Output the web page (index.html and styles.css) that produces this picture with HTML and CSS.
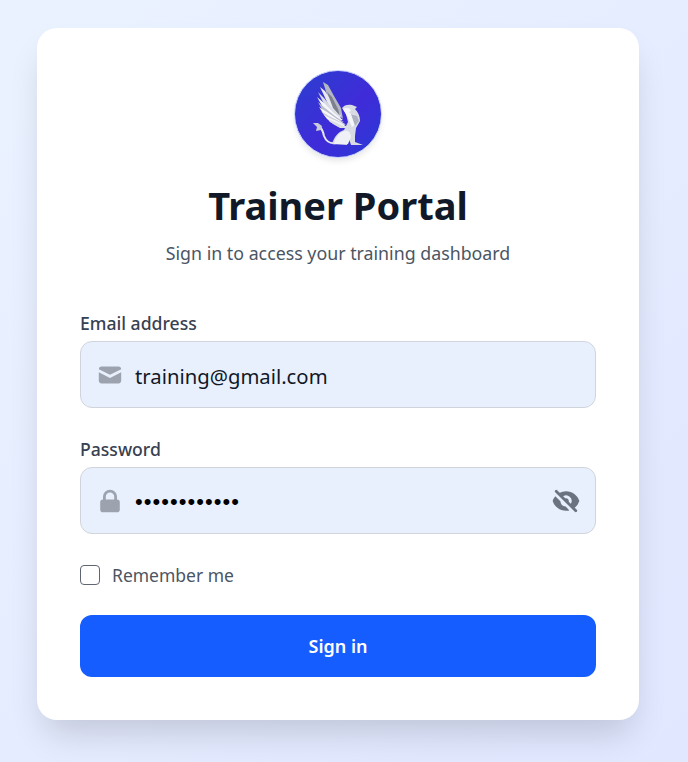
FILE: index.html
```html
<!DOCTYPE html>
<html lang="en">
<head>
    <meta charset="UTF-8">
    <meta name="viewport" content="width=device-width, initial-scale=1.0">
    <title>Trainer Portal</title>
    <link rel="stylesheet" href="styles.css">
</head>
<body>
    <div class="card">
        <div class="logo">
            <svg viewBox="0 0 88 88" width="88" height="88">
                <!-- griffin: wing feathers back to front, then body -->
                <g class="griffin">
                    <path fill="#b4b7c3" d="M29 12 L34 15 L40 26 L47 38 L49 49 L43 44 L34 28 Z"/>
                    <path fill="#e9eaf0" d="M26 17 L31 21 L38 32 L47 46 L45 48 L34 34 Z"/>
                    <path fill="#7d818e" d="M33 22 L38 27 L44 39 L46 46 L39 38 Z"/>
                    <path fill="#d8dae3" d="M24 22 L30 28 L38 38 L47 48 L44 49 L32 38 Z"/>
                    <path fill="#f6f7fa" d="M23 27 L30 33 L40 43 L49 50 L45 50 L31 41 Z"/>
                    <path fill="#bcbfcb" d="M24 32 L31 38 L41 46 L50 52 L44 51 L30 43 Z"/>
                    <path fill="#f8f8fb" d="M25 37 L33 42 L43 49 L51 54 L44 53 L31 46 Z"/>
                    <path fill="#cdd0da" d="M27 41 L35 46 L45 51 L52 55 L44 55 L33 49 Z"/>
                    <path fill="#f3f4f8" d="M30 45 L38 49 L47 53 L53 57 L45 57 L36 52 Z"/>
                    <path fill="#dcdee6" d="M34 49 L43 53 L54 58 L46 58 L39 54 Z"/>
                    <path fill="none" stroke="#e6e7ee" stroke-width="2" stroke-linecap="round" d="M42 73 C36 74 32 71 30 66 C29 61 28 59 26 57"/>
                    <path fill="#c9ccd8" d="M19 53 L24 53 L28 56 L27 60 L22 61 L23 57 Z"/>
                    <path fill="#d9dbe4" d="M48 38 C50 35 54 34 58 35 L63 37 L61 39 C64 42 66 46 66 51 L62 58 L61 66 L61 72 L69 75 L57 75 L55 69 L53 75 L38 74 C40 67 44 62 50 60 L54 52 L52 44 Z"/>
                    <path fill="#f5f6fa" d="M49 39 C52 37 56 38 57 40 L55 43 L61 45 L62 54 L58 57 L54 48 Z"/>
                    <path fill="#aeb1bf" d="M57 44 L63 46 L65 51 L61 56 L59 50 Z"/>
                    <path fill="#f0f1f6" d="M48 62 C53 59 57 62 57 67 L54 74 L40 74 C41 69 44 64 48 62 Z"/>
                </g>
            </svg>
        </div>
        <h1>Trainer Portal</h1>
        <p class="subtitle">Sign in to access your training dashboard</p>

        <div class="field">
            <label class="field-label">Email address</label>
            <div class="input-box">
                <svg class="icon" viewBox="0 0 20 20" width="28" height="28" fill="#9ca3af">
                    <path d="M2.003 5.884L10 9.882l7.997-3.998A2 2 0 0016 4H4a2 2 0 00-1.997 1.884z"/>
                    <path d="M18 8.118l-8 4-8-4V14a2 2 0 002 2h12a2 2 0 002-2V8.118z"/>
                </svg>
                <span class="input-text">training@gmail.com</span>
            </div>
        </div>

        <div class="field">
            <label class="field-label">Password</label>
            <div class="input-box">
                <svg class="icon" viewBox="0 0 20 20" width="28" height="28" fill="#9ca3af">
                    <path fill-rule="evenodd" clip-rule="evenodd" d="M5 9V7a5 5 0 0110 0v2a2 2 0 012 2v5a2 2 0 01-2 2H5a2 2 0 01-2-2v-5a2 2 0 012-2zm8-2v2H7V7a3 3 0 016 0z"/>
                </svg>
                <span class="input-text dots">••••••••••••</span>
                <svg class="eye" viewBox="0 0 20 20" width="28" height="28" fill="#6b7280">
                    <path fill-rule="evenodd" clip-rule="evenodd" d="M3.707 2.293a1 1 0 00-1.414 1.414l14 14a1 1 0 001.414-1.414l-1.473-1.473A10.014 10.014 0 0019.542 10C18.268 5.943 14.478 3 10 3a9.958 9.958 0 00-4.512 1.074l-1.78-1.781zm4.261 4.26l1.514 1.515a2.003 2.003 0 012.45 2.45l1.514 1.514a4 4 0 00-5.478-5.478z"/>
                    <path d="M12.454 16.697L9.75 13.992a4 4 0 01-3.742-3.741L2.335 6.578A9.98 9.98 0 00.458 10c1.274 4.057 5.065 7 9.542 7 .847 0 1.669-.105 2.454-.303z"/>
                </svg>
            </div>
        </div>

        <div class="remember">
            <span class="checkbox"></span>
            <span>Remember me</span>
        </div>

        <button class="submit">Sign in</button>
    </div>
</body>
</html>
```

FILE: styles.css
```css
* {
    box-sizing: border-box;
}

html, body {
    height: 100%;
}

body {
    margin: 0;
    padding: 28px 49px 0 37px;
    overflow: hidden;
    font-family: "Noto Sans", sans-serif;
    background: linear-gradient(135deg, #ebf2ff, #e0e7ff);
}

.card {
    height: 692px;
    padding: 42px 43px;
    background: white;
    border-radius: 20px;
    box-shadow: 0 20px 35px -8px rgba(0, 0, 0, 0.16);
}

.logo {
    width: 88px;
    height: 88px;
    margin: 0 auto;
    border-radius: 50%;
    background: linear-gradient(135deg, #2b3fcf, #3f2bd8 55%, #2a3ad6);
    border: 1.5px solid #c7d2fe;
    box-shadow: 0 4px 6px -1px rgba(0, 0, 0, 0.1);
    overflow: hidden;
}

.logo svg {
    display: block;
    margin: -1.5px;
}

.griffin {
    filter: blur(0.25px);
}

h1 {
    margin: 22px 0 0;
    font-size: 38px;
    line-height: 50px;
    font-weight: 700;
    text-align: center;
    color: #111827;
}

.subtitle {
    margin: 9px 0 0;
    font-size: 17.8px;
    line-height: 28px;
    text-align: center;
    color: #4b5563;
}

.field {
    margin-bottom: 29px;
}

.subtitle + .field {
    margin-top: 44px;
}

.field-label {
    display: block;
    margin-bottom: 6px;
    font-size: 17.6px;
    line-height: 24px;
    font-weight: 500;
    color: #374151;
}

.input-box {
    display: flex;
    align-items: center;
    height: 67px;
    padding: 0 15px;
    background: #e8f0fe;
    border: 1px solid #d1d5db;
    border-radius: 12px;
}

.input-text {
    margin-left: 11px;
    margin-top: 2px;
    font-size: 20.3px;
    color: #111827;
}

.dots {
    margin-top: 2px;
    font-family: "Liberation Sans", sans-serif;
    font-size: 22px;
    letter-spacing: 1.05px;
    color: #000;
}

.eye {
    margin-left: auto;
}

.remember {
    display: flex;
    align-items: center;
    gap: 12px;
    margin-top: 2px;
    font-size: 17.5px;
    line-height: 24px;
    color: #4b5563;
}

.checkbox {
    width: 20px;
    height: 20px;
    background: white;
    border: 1.5px solid #5f6673;
    border-radius: 4px;
}

.submit {
    display: block;
    width: 100%;
    height: 62px;
    margin-top: 28px;
    border: none;
    border-radius: 12px;
    background: #165dff;
    color: white;
    font-family: inherit;
    font-size: 18px;
    font-weight: 600;
    cursor: pointer;
}
```
